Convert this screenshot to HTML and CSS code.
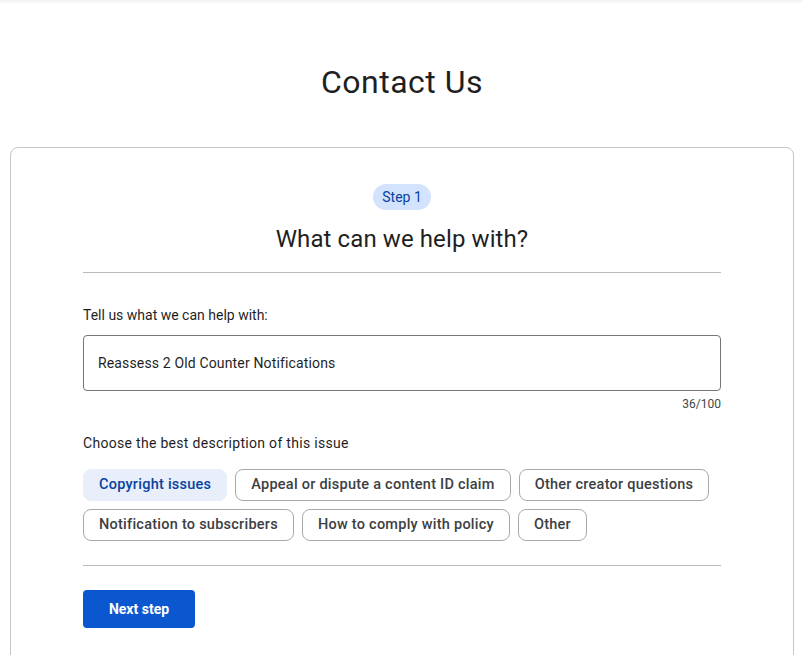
FILE: index.html
```html
<!DOCTYPE html>
<html lang="en">
<head>
<meta charset="utf-8">
<title>Contact Us</title>
<link rel="stylesheet" href="styles.css">
</head>
<body>
<div class="topbar"></div>
<main class="page">
  <h1 class="title">Contact Us</h1>
  <section class="card">
    <div class="content">
      <div class="step-wrap"><span class="step">Step 1</span></div>
      <h2 class="question">What can we help with?</h2>
      <hr class="divider">
      <label class="label">Tell us what we can help with:</label>
      <div class="input">Reassess 2 Old Counter Notifications</div>
      <div class="counter">36/100</div>
      <p class="label choose">Choose the best description of this issue</p>
      <div class="chips">
        <span class="chip selected">Copyright issues</span>
        <span class="chip">Appeal or dispute a content ID claim</span>
        <span class="chip">Other creator questions</span>
        <span class="chip">Notification to subscribers</span>
        <span class="chip">How to comply with policy</span>
        <span class="chip">Other</span>
      </div>
      <hr class="divider lower">
      <button class="next">Next step</button>
    </div>
  </section>
</main>
</body>
</html>
```
FILE: styles.css
```css
* { box-sizing: border-box; }
html, body { margin: 0; padding: 0; background: #fff; }
body {
  font-family: Roboto, "Open Sans", "Liberation Sans", sans-serif;
  color: #1f1f1f;
}
.topbar {
  height: 3px;
  background: linear-gradient(#f1f1f1, #fafafa);
}
.page {
  padding: 0 8px 0 10px;
}
.title {
  margin: 0;
  padding-top: 59px;
  height: 144px;
  text-align: center;
  font-size: 32px;
  font-weight: 400;
  line-height: 40px;
  letter-spacing: 0.5px;
}
.card {
  border: 1px solid #c4c7c5;
  border-radius: 8px;
  padding: 36px 0 40px;
  min-height: 520px;
}
.content {
  width: 638px;
  margin: 0 auto;
}
.step-wrap { text-align: center; }
.step {
  display: inline-block;
  background: #d3e3fd;
  color: #0842a0;
  font-size: 14px;
  line-height: 26px;
  height: 26px;
  padding: 0 9px;
  border-radius: 13px;
}
.question {
  margin: 15px 0 0;
  text-align: center;
  font-size: 24px;
  font-weight: 400;
  line-height: 28px;
  letter-spacing: 0.1px;
}
.divider {
  border: 0;
  border-top: 1px solid #b8bbb9;
  margin: 19px 0 0;
}
.label {
  display: block;
  margin: 34px 0 0;
  font-size: 14px;
  line-height: 16px;
  color: #1f1f1f;
}
.input {
  margin-top: 12px;
  height: 56px;
  border: 1px solid #747775;
  border-radius: 4px;
  padding: 0 14px;
  display: flex;
  align-items: center;
  font-size: 14px;
  letter-spacing: 0.15px;
  color: #1f1f1f;
}
.counter {
  text-align: right;
  font-size: 12px;
  line-height: 14px;
  margin-top: 6px;
  color: #444746;
}
.choose {
  margin-top: 24px;
  letter-spacing: 0.3px;
}
.chips {
  margin-top: 18px;
  display: flex;
  flex-wrap: wrap;
  gap: 8px;
}
.chip {
  height: 32px;
  line-height: 30px;
  padding: 0 15px;
  border: 1px solid #a8aaa9;
  border-radius: 8px;
  font-size: 14.5px;
  letter-spacing: 0.25px;
  font-weight: 500;
  color: #3c4043;
  white-space: nowrap;
}
.chip.selected {
  background: #e8effa;
  border-color: #e8effa;
  color: #0842a0;
}
.divider.lower {
  margin-top: 24px;
}
.next {
  margin-top: 24px;
  height: 38px;
  width: 112px;
  border: 0;
  border-radius: 4px;
  background: #0b57d0;
  color: #fff;
  font-family: inherit;
  font-size: 14px;
  font-weight: 700;
  padding: 0;
}
```
